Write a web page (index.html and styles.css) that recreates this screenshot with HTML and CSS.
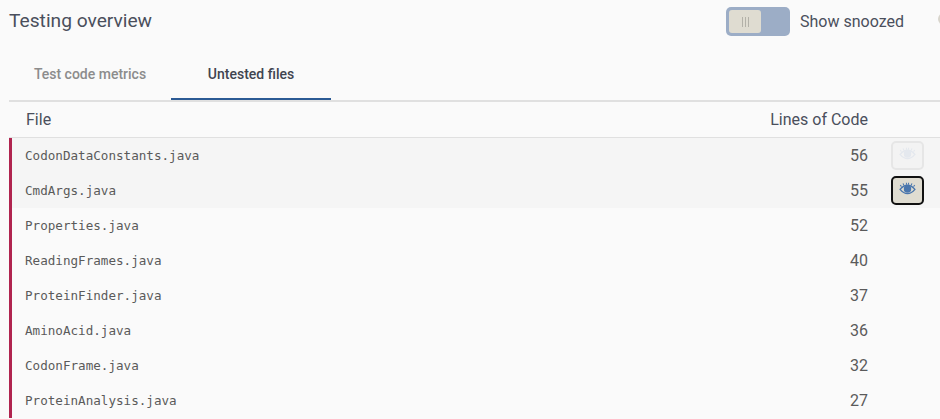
FILE: index.html
```html
<!DOCTYPE html>
<html lang="en">
<head>
    <meta charset="UTF-8">
    <title>Testing overview</title>
    <link rel="stylesheet" href="styles.css">
</head>
<body>
    <svg width="0" height="0" class="defs">
        <symbol id="eye" viewBox="0 0 18 14">
            <path d="M1 8C3.500 5 6 3.500 9 3.500s5.500 1.500 8 4.500c-2.500 3-5 4.500-8 4.500S3.500 11 1 8z" fill="none" stroke="currentColor" stroke-width="1.400"/>
            <circle cx="9" cy="7.500" r="4" fill="currentColor"/>
            <path d="M2.500 5 1.200 3.200M5 3.500 4.200 1.500M8 3 7.800 .8M10 3l.2-2.200M13 3.500l.8-2M15.500 5l1.300-1.800" stroke="currentColor" stroke-width="1.100"/>
        </symbol>
    </svg>
    <div class="header">
        <h1 class="title">Testing overview</h1>
        <div class="snooze">
            <div class="toggle">
                <div class="knob"><span></span><span></span><span></span></div>
            </div>
            <span class="snooze-label">Show snoozed</span>
        </div>
        <div class="edge-dot"></div>
    </div>
    <div class="tabs">
        <div class="tab">Test code metrics</div>
        <div class="tab active">Untested files</div>
    </div>
    <div class="table-head">
        <div class="col-file">File</div>
        <div class="col-lines">Lines of Code</div>
    </div>
    <div class="rows">
        <div class="row shaded">
            <div class="col-file">CodonDataConstants.java</div>
            <div class="col-lines">56</div>
            <div class="col-action"><button class="snooze-btn faded"><svg class="eye"><use href="#eye"/></svg></button></div>
        </div>
        <div class="row shaded">
            <div class="col-file">CmdArgs.java</div>
            <div class="col-lines">55</div>
            <div class="col-action"><button class="snooze-btn focused"><svg class="eye"><use href="#eye"/></svg></button></div>
        </div>
        <div class="row">
            <div class="col-file">Properties.java</div>
            <div class="col-lines">52</div>
        </div>
        <div class="row">
            <div class="col-file">ReadingFrames.java</div>
            <div class="col-lines">40</div>
        </div>
        <div class="row">
            <div class="col-file">ProteinFinder.java</div>
            <div class="col-lines">37</div>
        </div>
        <div class="row">
            <div class="col-file">AminoAcid.java</div>
            <div class="col-lines">36</div>
        </div>
        <div class="row">
            <div class="col-file">CodonFrame.java</div>
            <div class="col-lines">32</div>
        </div>
        <div class="row">
            <div class="col-file">ProteinAnalysis.java</div>
            <div class="col-lines">27</div>
        </div>
    </div>
</body>
</html>
```

FILE: styles.css
```css
html, body {
    height: 100%;
    overflow: hidden;
}
body {
    margin: 0;
    padding-left: 9px;
    font-family: Roboto, "Liberation Sans", sans-serif;
    color: #4a4f5c;
    background-color: #fafafa;
}
.defs {
    position: absolute;
}
.header {
    display: flex;
    align-items: center;
    height: 43px;
    position: relative;
}
.title {
    margin: 0 0 2px;
    flex: 1;
    font-size: 19.200px;
    font-weight: 400;
}
.snooze {
    display: flex;
    align-items: center;
    gap: 10px;
    margin-right: 36px;
}
.toggle {
    width: 64px;
    height: 29px;
    padding: 3px;
    box-sizing: border-box;
    background-color: #9cadc6;
    border-radius: 5px;
}
.knob {
    display: flex;
    align-items: center;
    justify-content: center;
    gap: 2px;
    width: 32px;
    height: 23px;
    background-color: #dfdcd1;
    border-radius: 3px;
}
.knob span {
    width: 1px;
    height: 10px;
    background-color: #b3b1a8;
}
.snooze-label {
    font-size: 16px;
}
.edge-dot {
    position: absolute;
    right: -10px;
    top: 13px;
    width: 12px;
    height: 12px;
    border-radius: 50%;
    background-color: #d8d5cc;
}
.tabs {
    display: flex;
    height: 57px;
    border-bottom: 2px solid #e0e0e0;
}
.tab {
    width: 162px;
    box-sizing: border-box;
    height: 57px;
    line-height: 63px;
    text-align: center;
    font-size: 14px;
    font-weight: 500;
    color: #8c8c8c;
}
.tab.active {
    width: 160px;
    color: #3f4450;
    border-bottom: 2px solid #2b5a94;
}
.table-head {
    display: flex;
    align-items: center;
    height: 35px;
    border-bottom: 1px solid #e0e0e0;
    font-size: 16px;
}
.col-file {
    flex: 1;
    padding-left: 17px;
}
.col-lines {
    width: 200px;
    text-align: right;
    margin-right: 72px;
}
.rows {
    border-left: 3px solid #b0244f;
}
.row {
    display: flex;
    align-items: center;
    height: 35px;
    position: relative;
    font-size: 16px;
    color: #5a5a5a;
}
.row.shaded {
    background-color: #f5f5f5;
}
.row .col-file {
    padding-left: 13px;
    font-family: "DejaVu Sans Mono", monospace;
    font-size: 12.600px;
}
.col-action {
    position: absolute;
    right: 16px;
    top: 3px;
}
.snooze-btn {
    display: flex;
    align-items: center;
    justify-content: center;
    width: 33px;
    height: 29px;
    padding: 0 0 4px;
    box-sizing: border-box;
    border-radius: 5px;
    color: #4a76ad;
}
.snooze-btn.faded {
    border: 2px solid #e6e6e6;
    background-color: #f3f3f3;
    color: #e4e8ee;
}
.snooze-btn.focused {
    border: 2px solid #111111;
    background-color: #dfdcd1;
}
.eye {
    width: 17px;
    height: 13px;
}
```
